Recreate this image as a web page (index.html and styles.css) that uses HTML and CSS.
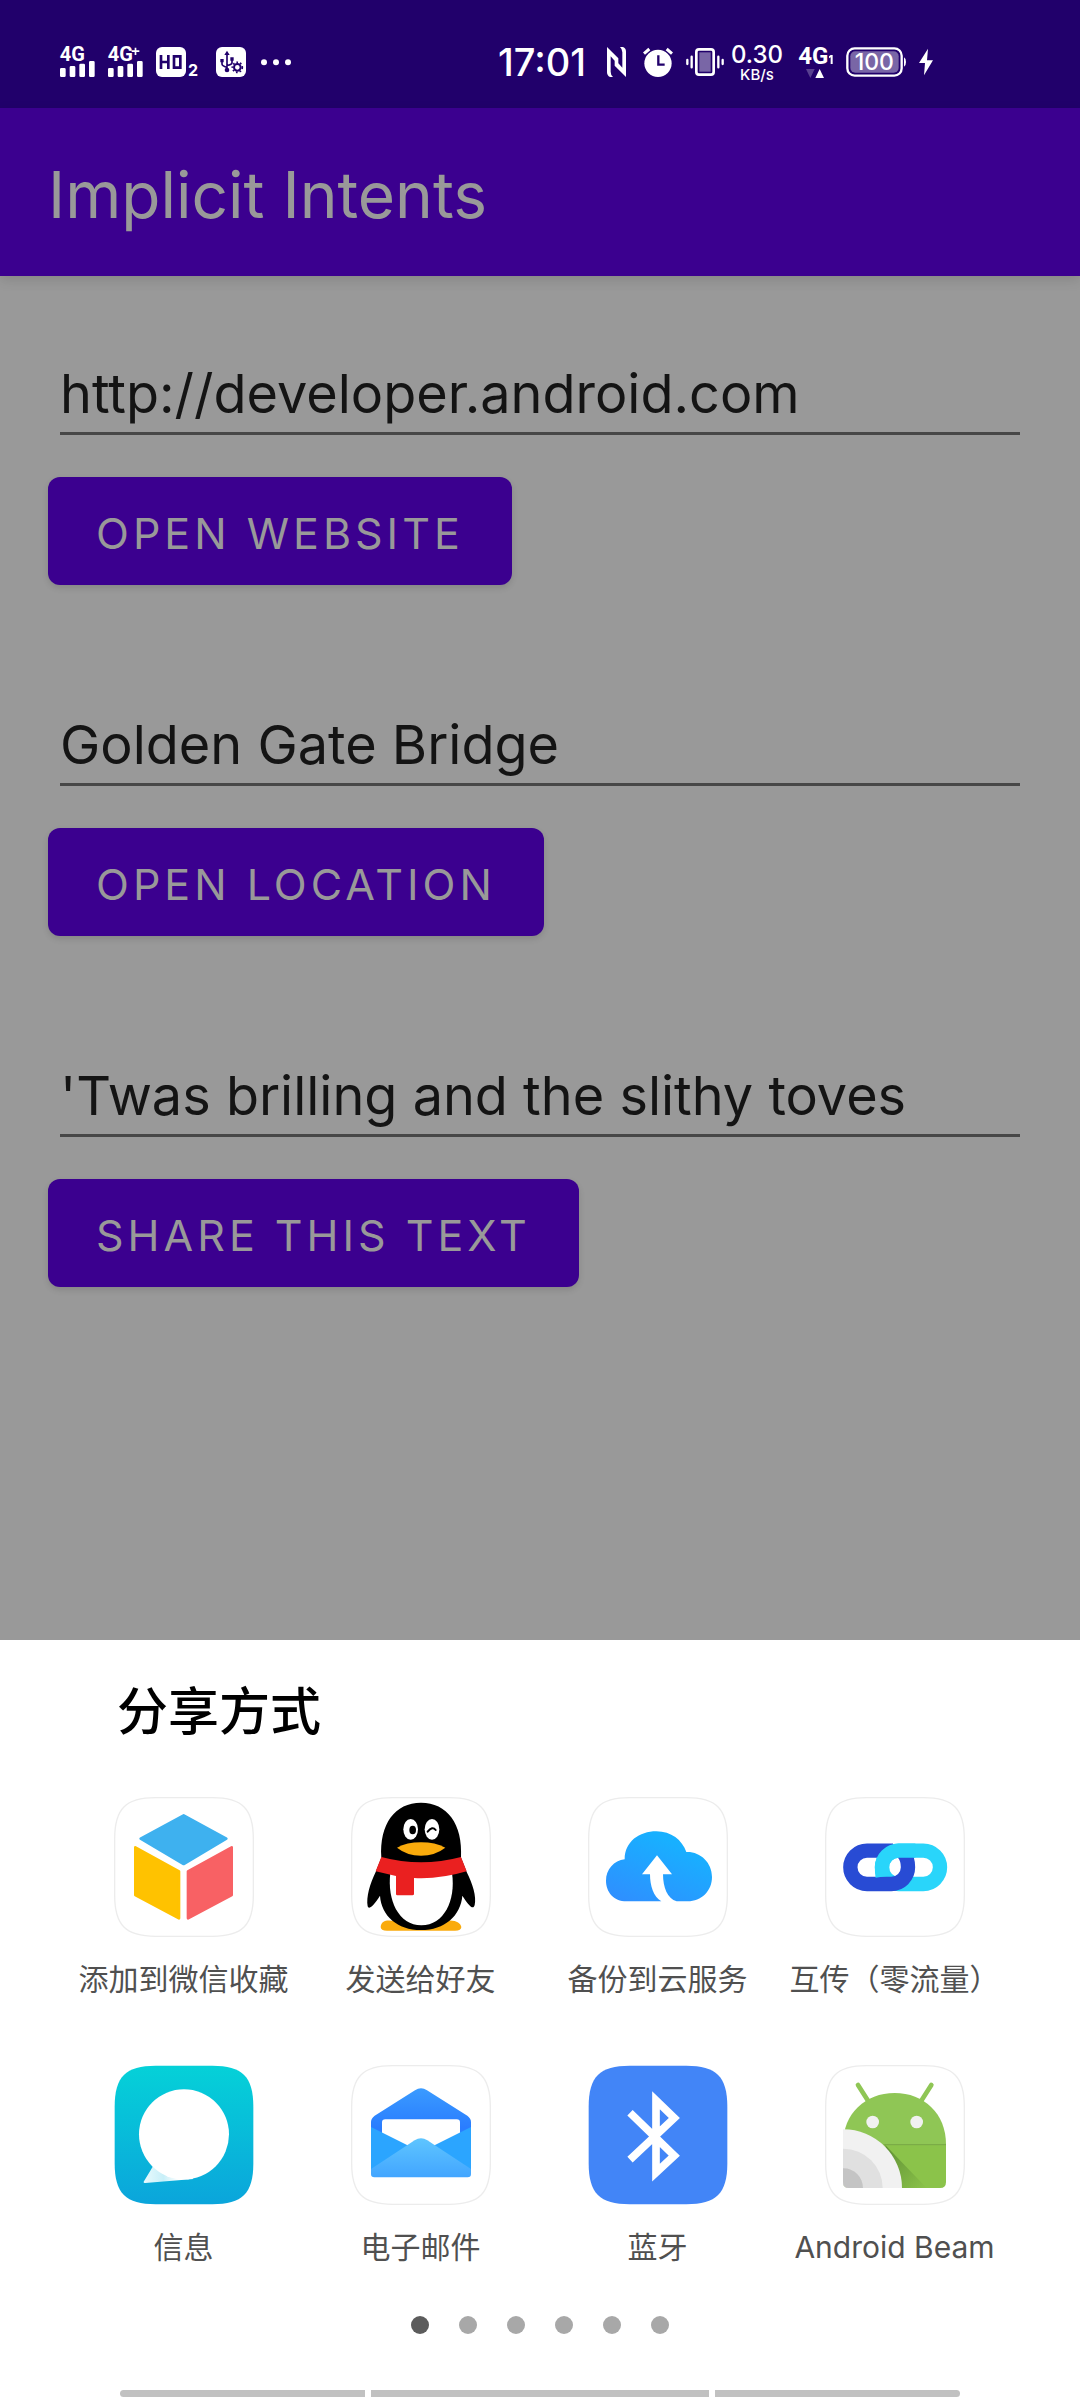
FILE: index.html
```html
<!DOCTYPE html>
<html lang="zh-CN">
<head>
<meta charset="utf-8">
<meta name="viewport" content="width=device-width, initial-scale=1">
<title>Implicit Intents</title>
<link rel="stylesheet" href="styles.css">
</head>
<body>
<div class="screen">
  <div class="status-bar">
    <div class="status-group">
      <svg class="signal" viewBox="60 81 105 90">
        <text class="net" x="59" y="124">4G</text>
        <path d="M60 148q0-4 4-4h9q4 0 4 4v19q0 4-4 4h-9q-4 0-4-4zM89 142q0-4 4-4h9q4 0 4 4v25q0 4-4 4h-9q-4 0-4-4zM118 135q0-4 4-4h9q4 0 4 4v32q0 4-4 4h-9q-4 0-4-4zM147 127q0-4 4-4h9q4 0 4 4v40q0 4-4 4h-9q-4 0-4-4z"/>
      </svg>
      <svg class="signal" viewBox="204 81 105 90">
        <text class="net" x="203" y="124">4G</text>
        <path d="M284 83h5v8h9v5h-9v9h-5v-9h-9v-5h9z"/>
        <path d="M204 148q0-4 4-4h9q4 0 4 4v19q0 4-4 4h-9q-4 0-4-4zM233 142q0-4 4-4h9q4 0 4 4v25q0 4-4 4h-9q-4 0-4-4zM262 135q0-4 4-4h9q4 0 4 4v32q0 4-4 4h-9q-4 0-4-4zM291 127q0-4 4-4h9q4 0 4 4v40q0 4-4 4h-9q-4 0-4-4z"/>
      </svg>
      <svg class="hd" viewBox="348 81 129 90">
        <rect x="348" y="81" width="90" height="90" rx="18"/>
        <path class="cut-line" stroke-width="8" d="M363 105v42M363 126h22M385 105v42M402 109h19v34h-19z"/>
        <text class="sub" x="444" y="169">2</text>
      </svg>
      <svg class="usb" viewBox="528 81 90 90">
        <rect x="528" y="81" width="90" height="90" rx="18"/>
        <path class="cut-line" stroke-width="5" d="M561 100v50M546 122v10q0 6 15 10M576 118v10q0 6-15 8"/>
        <path class="cut" d="M561 92l8 13h-16zM541 117h10v10h-10zM571 112h10v10h-10z"/>
        <circle class="cut" cx="561" cy="150" r="7"/>
        <circle class="cut-line" stroke-width="6" cx="592" cy="142" r="10"/>
        <circle class="cut-line" stroke-width="5" stroke-dasharray="5 6" cx="592" cy="142" r="15"/>
      </svg>
      <svg class="more" viewBox="663 81 93 90"><circle cx="672" cy="127" r="9"/><circle cx="708" cy="127" r="9"/><circle cx="744" cy="127" r="9"/></svg>
    </div>
    <div class="status-group">
      <time class="clock">17:01</time>
      <svg class="nfc" viewBox="0 0 57 90"><path d="M0 0L34 34V54L11 28V74Q11 84 18 90H9Q0 86 0 76ZM57 90L23 56V36L46 62V16Q46 6 39 0H48Q57 4 57 14Z"/></svg>
      <svg class="alarm" viewBox="480 81 90 90">
        <circle cx="525" cy="130" r="41"/>
        <path class="line" stroke-width="9" d="M483 101l16-14M567 101l-16-14"/>
        <path class="cut-line" stroke-width="7" d="M526 106v28h19"/>
      </svg>
      <svg class="vibrate" viewBox="615 81 123 90">
        <rect class="line" stroke-width="8" x="646" y="88" width="52" height="76" rx="8"/>
        <rect class="soft" x="655" y="97" width="34" height="58"/>
        <path class="line" stroke-width="7" stroke-linecap="round" d="M619 120v12M632 110v32M712 110v32M725 120v12"/>
      </svg>
      <span class="speed"><b>0.30</b><small>KB/s</small></span>
      <svg class="data" viewBox="270 75 102 102">
        <text class="net-large" x="268" y="131">4G</text>
        <path d="M365 105h6v27h-6v-20l-5 3v-6zM319 174l13-27 13 27z"/>
        <path class="soft-dark" d="M291 147h26l-13 27z"/>
      </svg>
      <svg class="battery" viewBox="405 81 180 90">
        <rect class="line" stroke-width="7" x="409" y="85" width="163" height="82" rx="22"/>
        <rect class="soft" x="418" y="94" width="145" height="64" rx="15"/>
        <path d="M579 112q6 4 6 14t-6 14z"/>
        <text class="level" x="490" y="151" text-anchor="middle">100</text>
      </svg>
      <svg class="bolt" viewBox="627 81 42 90"><path d="M654 86l-27 43h18l-3 37 27-45h-18z"/></svg>
    </div>
  </div>

  <header class="app-bar"><h1>Implicit Intents</h1></header>

  <main class="content">
    <section class="field-group">
      <input type="text" aria-label="Website" value="http://developer.android.com" spellcheck="false">
      <button type="button">OPEN WEBSITE</button>
    </section>
    <section class="field-group">
      <input type="text" aria-label="Location" value="Golden Gate Bridge" spellcheck="false">
      <button type="button">OPEN LOCATION</button>
    </section>
    <section class="field-group">
      <input type="text" aria-label="Text to share" value="'Twas brilling and the slithy toves" spellcheck="false">
      <button type="button">SHARE THIS TEXT</button>
    </section>
  </main>

  <section class="sheet">
    <h2>分享方式</h2>
    <svg class="defs" aria-hidden="true">
      <defs>
        <path id="tile" d="M2 125C2 35 35 2 125 2H295C385 2 418 35 418 125V295C418 385 385 418 295 418H125C35 418 2 385 2 295Z"/>
        <linearGradient id="cloud-fill" x1="0.7" y1="0.2" x2="0.2" y2="1"><stop offset="0" stop-color="#18b0ff"/><stop offset="1" stop-color="#2e90ff"/></linearGradient>
        <linearGradient id="msg-fill" x1="0" y1="0" x2="0" y2="1"><stop offset="0" stop-color="#05d1d8"/><stop offset="1" stop-color="#0ba5db"/></linearGradient>
        <linearGradient id="tail-fill" x1="0" y1="0" x2="1" y2="0"><stop offset="0" stop-color="#e9fafd"/><stop offset="0.4" stop-color="#c8eff8"/><stop offset="0.7" stop-color="#ffffff"/></linearGradient>
        <linearGradient id="mail-back" x1="0" y1="0" x2="0" y2="1"><stop offset="0" stop-color="#3a9bff"/><stop offset="0.6" stop-color="#2a7dff"/></linearGradient>
        <linearGradient id="mail-front" x1="0" y1="0" x2="0" y2="1"><stop offset="0" stop-color="#5ec5ff"/><stop offset="1" stop-color="#42a5ff"/></linearGradient>
        <linearGradient id="beam-shade" x1="0" y1="0" x2="1" y2="1"><stop offset="0" stop-color="#5f8f34"/><stop offset="1" stop-color="#8bc34a"/></linearGradient>
        <clipPath id="beam-clip"><path d="M849 260H1158V425q0 18-18 18H867q-18 0-18-18Z"/></clipPath>
      </defs>
    </svg>
    <div class="targets">
      <button type="button" class="target">
        <svg viewBox="102 80 420 420">
          <use href="#tile" x="102" y="80" class="tile-plain"/>
          <path fill="#3eb1ef" stroke="#3eb1ef" stroke-width="8" stroke-linejoin="round" d="M311 135L439 205 311 281 182 205Z"/>
          <path fill="#ffc200" stroke="#ffc200" stroke-width="8" stroke-linejoin="round" d="M166 231L297 303V444L166 374Z"/>
          <path fill="#f86164" stroke="#f86164" stroke-width="8" stroke-linejoin="round" d="M455 231L324 303V444L455 374Z"/>
        </svg>
        <span>添加到微信收藏</span>
      </button>
      <button type="button" class="target">
        <svg viewBox="813 80 420 420">
          <use href="#tile" x="813" y="80" class="tile-plain"/>
          <path fill="#faab0c" d="M902 470C904 450 920 448 945 452L1020 470 1100 451C1128 448 1142 458 1144 470Q1144 481 1125 481H921Q902 481 902 470Z"/>
          <path d="M904 262C898 160 945 97 1023 97S1149 160 1143 262L1160 305C1178 340 1190 380 1184 404 1180 418 1170 412 1147 376 1142 436 1094 479 1023 479S904 436 900 376C878 410 866 418 863 408 858 380 870 340 887 305Z"/>
          <path fill="#fff" d="M931 308H1116C1128 390 1092 465 1024 465S921 390 931 308Z"/>
          <path fill="#ea2020" d="M904 260Q1023 292 1143 260L1160 303Q1080 327 1002 323V371Q1002 375 997 375H952Q948 375 948 371V317L887 303Z"/>
          <ellipse fill="#fff" cx="992" cy="177" rx="22" ry="31"/><ellipse fill="#fff" cx="1056" cy="177" rx="22" ry="31"/>
          <ellipse cx="998" cy="179" rx="10" ry="13"/>
          <path fill="none" stroke="#000" stroke-width="6" stroke-linecap="round" d="M1043 184Q1057 166 1067 179"/>
          <path fill="#faab0c" d="M951 232Q980 216 1023 216T1096 232Q1065 256 1023 256T951 232Z"/>
        </svg>
        <span>发送给好友</span>
      </button>
      <button type="button" class="target">
        <svg viewBox="84 80 420 420">
          <use href="#tile" x="84" y="80" class="tile-plain"/>
          <path fill="url(#cloud-fill)" d="M200 393C160 393 138 364 138 331 138 298 162 270 194 267 194 214 238 183 289 183 334 183 366 209 379 245 420 243 456 276 456 320 456 362 424 393 383 393H350C322 386 309 350 309 312H336L291 255 246 312H270C270 345 280 380 304 393Z"/>
        </svg>
        <span>备份到云服务</span>
      </button>
      <button type="button" class="target">
        <svg viewBox="795 80 420 420">
          <use href="#tile" x="795" y="80" class="tile-plain"/>
          <rect fill="none" stroke="#29d5fa" stroke-width="43" x="966" y="241" width="174" height="100" rx="50"/>
          <path fill="none" stroke="#284bd4" stroke-width="43" d="M999 241H921A50 50 0 0 0 921 341H994A50 50 0 0 0 1044 291Q1044 264 1030 248"/>
          <path fill="none" stroke="#29d5fa" stroke-width="43" d="M968 319Q966 306 966 291A50 50 0 0 1 1016 241H1066"/>
        </svg>
        <span>互传（零流量）</span>
      </button>
      <button type="button" class="target">
        <svg viewBox="102 74 420 420">
          <use href="#tile" x="102" y="74" fill="url(#msg-fill)"/>
          <path fill="url(#tail-fill)" d="M219 378L191 424Q190 429 196 428L340 416 300 370Z"/>
          <circle fill="#fff" cx="312" cy="282" r="135"/>
          <path fill="#fff" d="M240 390L264 410 325 417 345 400Z"/>
        </svg>
        <span>信息</span>
      </button>
      <button type="button" class="target">
        <svg viewBox="813 74 420 420">
          <use href="#tile" x="813" y="74" class="tile-plain"/>
          <path fill="url(#mail-back)" d="M873 245Q873 234 884 226L1005 150Q1023 138 1041 150L1162 226Q1173 234 1173 245V340H873Z"/>
          <path fill="#fff" d="M906 330V247Q906 237 916 237H1130Q1140 237 1140 247V330Z"/>
          <path fill="#2ba5ff" d="M873 260L1023 335 1173 260V400H873Z"/>
          <path fill="url(#mail-front)" d="M873 386L1004 300Q1023 288 1042 300L1173 386V401Q1173 411 1163 411H883Q873 411 873 401Z"/>
        </svg>
        <span>电子邮件</span>
      </button>
      <button type="button" class="target">
        <svg viewBox="84 74 420 420">
          <use href="#tile" x="84" y="74" fill="#4285f7"/>
          <path fill="none" stroke="#fff" stroke-width="23" d="M210 217L343 346 288 397V180L343 233 210 358"/>
        </svg>
        <span>蓝牙</span>
      </button>
      <button type="button" class="target">
        <svg viewBox="795 74 420 420">
          <use href="#tile" x="795" y="74" class="tile-plain"/>
          <path stroke="#8fc655" stroke-width="14" stroke-linecap="round" d="M894 134L926 184M1114 134L1082 184"/>
          <path fill="#8fc655" d="M849 312C849 220 916 158 1004 158S1158 220 1158 312Z"/>
          <path fill="#8bc34a" d="M849 312H1158V425Q1158 443 1140 443H867Q849 443 849 425Z"/>
          <path stroke="#75a540" stroke-width="3" d="M970 313H1158"/>
          <path fill="url(#beam-shade)" d="M975 313L1100 443H1020Z"/>
          <circle fill="#f1f1f1" cx="938" cy="245" r="19"/><circle fill="#f1f1f1" cx="1070" cy="245" r="19"/>
          <g clip-path="url(#beam-clip)">
            <circle fill="#f1f1f1" cx="850" cy="443" r="176"/><circle fill="#e0e0e0" cx="850" cy="443" r="118"/><circle fill="#c4c4c4" cx="850" cy="443" r="59"/>
          </g>
        </svg>
        <span>Android Beam</span>
      </button>
    </div>
    <div class="pager">
      <button type="button" class="current" aria-label="1"></button>
      <button type="button" aria-label="2"></button>
      <button type="button" aria-label="3"></button>
      <button type="button" aria-label="4"></button>
      <button type="button" aria-label="5"></button>
      <button type="button" aria-label="6"></button>
    </div>
    <div class="gesture-bar"><i></i><i></i><i></i></div>
  </section>
</div>
</body>
</html>
```
FILE: styles.css
```css
* {
  box-sizing: border-box;
}

body {
  margin: 0;
  background: #999;
  font-family: Inter, "Noto Sans CJK SC", sans-serif;
}

button,
input {
  margin: 0;
  padding: 0;
  border: 0;
  background: none;
  font-family: inherit;
}

svg {
  display: block;
  flex: none;
}

.screen {
  display: flex;
  flex-direction: column;
  min-height: 100vh;
}

/* Status bar */
.status-bar {
  display: flex;
  justify-content: space-between;
  align-items: center;
  height: 108px;
  padding: 16px 147px 0 60px;
  background: #21006b;
  color: #fff;
}

.status-group {
  display: flex;
  align-items: center;
  gap: 13px;
}

.status-bar svg {
  height: 30px;
  overflow: visible;
  fill: #fff;
}

.status-bar .signal { width: 35px; }
.status-bar .hd { width: 43px; }
.status-bar .usb { width: 30px; margin-left: 4px; }
.status-bar .more { width: 31px; margin-left: 2px; }
.status-bar .nfc { width: 19px; margin-left: 8px; }
.status-bar .alarm { width: 30px; margin-left: 4px; }
.status-bar .vibrate { width: 41px; }
.status-bar .data { width: 34px; height: 34px; margin-left: 4px; }
.status-bar .battery { width: 60px; }
.status-bar .bolt { width: 14px; }

.status-bar .line { fill: none; stroke: #fff; }
.status-bar .cut { fill: #21006b; }
.status-bar .cut-line { fill: none; stroke: #21006b; }
.status-bar .soft { fill: #fff; fill-opacity: 0.4; }
.status-bar .soft-dark { fill: #fff; fill-opacity: 0.25; }

.net { font: 700 60px Roboto, sans-serif; }
.net-large { font: 700 72px Roboto, sans-serif; }
.sub { font: 700 48px Inter, sans-serif; }
.level { font: 500 69px Inter, sans-serif; }

.clock {
  font-size: 38px;
  font-weight: 500;
  line-height: 38px;
}

.speed {
  display: flex;
  flex-direction: column;
  align-items: center;
  width: 50px;
  margin-left: -8px;
}

.speed b {
  font-size: 24px;
  font-weight: 500;
  line-height: 24px;
}

.speed small {
  font-size: 15px;
  font-weight: 500;
  line-height: 15px;
}

/* App bar */
.app-bar {
  padding: 6px 48px 0;
  background: #3b008f;
  color: #999;
  box-shadow: 0 4px 12px rgba(0, 0, 0, 0.12);
}

.app-bar h1 {
  margin: 0;
  font-size: 64px;
  font-weight: 400;
  line-height: 162px;
}

/* Form */
.content {
  display: flex;
  flex-direction: column;
  gap: 120px;
  padding: 78px 48px;
}

.field-group {
  display: flex;
  flex-direction: column;
  align-items: flex-start;
  gap: 42px;
  padding: 0 12px;
}

.field-group input {
  width: 100%;
  height: 81px;
  border-bottom: 3px solid #474747;
  border-radius: 0;
  color: #141414;
  font-size: 54px;
}

.field-group button {
  margin-left: -12px;
  height: 108px;
  padding: 4px 48px 0;
  border-radius: 12px;
  background: #3b008f;
  color: #999;
  font-size: 43px;
  letter-spacing: 4px;
  box-shadow: 0 3px 6px rgba(0, 0, 0, 0.12);
}

/* Share sheet */
.sheet {
  margin-top: auto;
  padding: 42px 0 3px;
  background: #fff;
}

.sheet h2 {
  margin: 0 0 55px;
  padding: 0 117px;
  color: #000;
  font-size: 51px;
  font-weight: 500;
  line-height: 60px;
}

.defs {
  position: absolute;
  width: 0;
  height: 0;
}

.targets {
  display: grid;
  grid-template-columns: repeat(4, 1fr);
  row-gap: 66px;
  padding: 0 67px 0 65px;
}

.target {
  display: flex;
  flex-direction: column;
  align-items: center;
  gap: 22px;
  color: #505050;
  font-size: 30px;
  line-height: 40px;
  white-space: nowrap;
}

.target svg {
  width: 140px;
  height: 140px;
}

.tile-plain {
  fill: #fff;
  stroke: #ececec;
  stroke-width: 4px;
}

.pager {
  display: flex;
  justify-content: center;
  gap: 30px;
  margin-top: 49px;
}

.pager button {
  width: 18px;
  height: 18px;
  border-radius: 50%;
  background: #a8a8a8;
}

.pager .current {
  background: #5c5c5c;
}

.gesture-bar {
  display: grid;
  grid-template-columns: 245fr 338fr 245fr;
  gap: 6px;
  margin-top: 56px;
  padding: 0 120px;
}

.gesture-bar i {
  height: 7px;
  background: #c1c1c1;
}

.gesture-bar i:first-child {
  border-radius: 4px 0 0 4px;
}

.gesture-bar i:last-child {
  border-radius: 0 4px 4px 0;
}
```
